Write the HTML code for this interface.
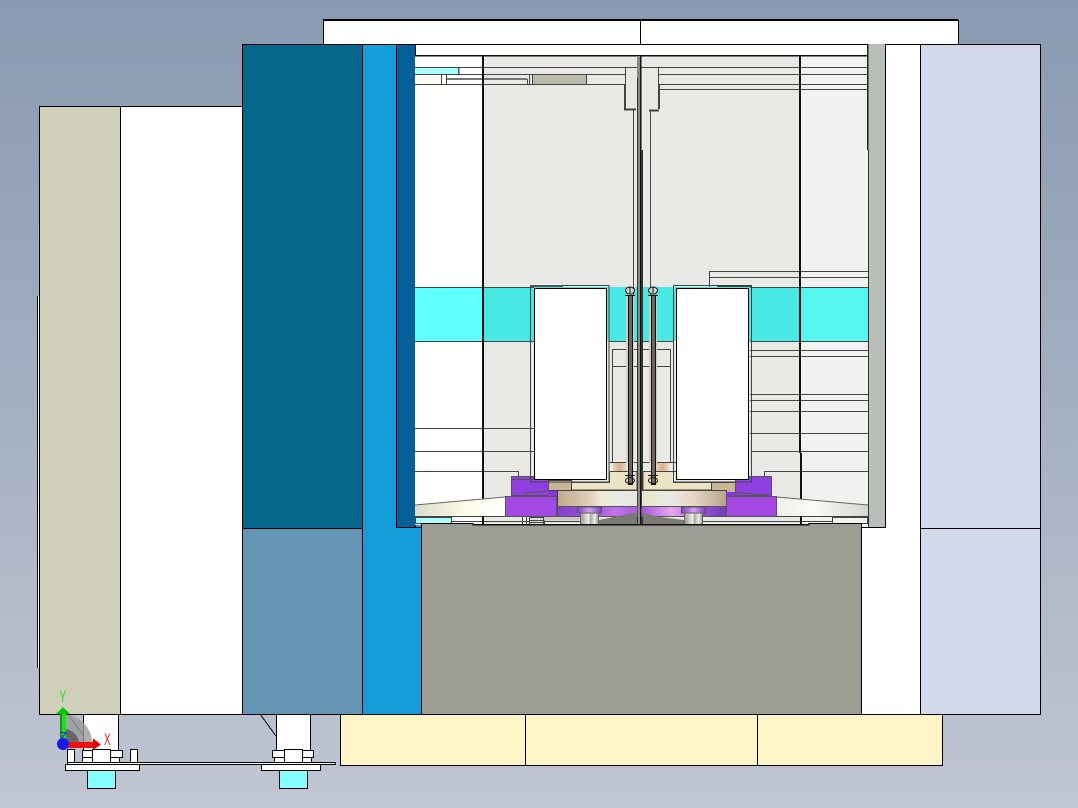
<!DOCTYPE html>
<html><head><meta charset="utf-8"><style>
html,body{margin:0;padding:0;width:1078px;height:808px;overflow:hidden}
svg{display:block}
text{font-family:"Liberation Sans",sans-serif}
</style></head><body>
<svg width="1078" height="808" viewBox="0 0 1078 808" xmlns="http://www.w3.org/2000/svg">
<defs>
<linearGradient id="bg" x1="0" y1="0" x2="0" y2="1"><stop offset="0" stop-color="#8899b1"/><stop offset="1" stop-color="#c0c6d2"/></linearGradient>
<linearGradient id="tanL" x1="0" y1="0" x2="1" y2="0"><stop offset="0" stop-color="#bfa98d"/><stop offset=".4" stop-color="#ded0b8"/><stop offset=".55" stop-color="#f0ebd8"/><stop offset=".8" stop-color="#e8e8e4"/><stop offset="1" stop-color="#e6e6e0"/></linearGradient>
<linearGradient id="tanR" x1="0" y1="0" x2="1" y2="0"><stop offset="0" stop-color="#e8e6c8"/><stop offset=".35" stop-color="#e9e9e4"/><stop offset=".6" stop-color="#e6d8c6"/><stop offset="1" stop-color="#b5a28c"/></linearGradient>
<linearGradient id="purL" x1="0" y1="0" x2="1" y2="0"><stop offset="0" stop-color="#7f41c8"/><stop offset=".4" stop-color="#a24fe0"/><stop offset=".7" stop-color="#c070e8"/><stop offset="1" stop-color="#b060e0"/></linearGradient>
<linearGradient id="purR" x1="0" y1="0" x2="1" y2="0"><stop offset="0" stop-color="#a850e0"/><stop offset=".35" stop-color="#e6a8ee"/><stop offset=".7" stop-color="#9a50dc"/><stop offset="1" stop-color="#6e3fb0"/></linearGradient>
<linearGradient id="wedgeL" x1="0" y1="0" x2="1" y2="0"><stop offset="0" stop-color="#dcdccc"/><stop offset=".55" stop-color="#fbfbe8"/><stop offset="1" stop-color="#ffffff"/></linearGradient>
<linearGradient id="wedgeR" x1="0" y1="0" x2="1" y2="0"><stop offset="0" stop-color="#eeeeea"/><stop offset=".4" stop-color="#fafaf6"/><stop offset="1" stop-color="#d4d6d0"/></linearGradient>
<linearGradient id="bolt" x1="0" y1="0" x2="1" y2="0"><stop offset="0" stop-color="#9a9a90"/><stop offset=".45" stop-color="#f0f0ea"/><stop offset=".55" stop-color="#a8a8a0"/><stop offset=".8" stop-color="#eeeeea"/><stop offset="1" stop-color="#8c8c84"/></linearGradient>
<linearGradient id="skin" x1="0" y1="0" x2="1" y2="0"><stop offset="0" stop-color="#e6d2b8"/><stop offset=".5" stop-color="#d9b28e"/><stop offset="1" stop-color="#e8dccb"/></linearGradient>
<linearGradient id="collar" x1="0" y1="0" x2="1" y2="0"><stop offset="0" stop-color="#7a3fc8"/><stop offset=".5" stop-color="#d6a0ee"/><stop offset="1" stop-color="#7a3fc8"/></linearGradient>
</defs>
<rect width="1078" height="808" fill="url(#bg)"/>

<g shape-rendering="crispEdges" stroke="#000" stroke-width="1">
<rect x="83.500" y="714.500" width="35" height="36" fill="#fff"/>
<rect x="276.500" y="714.500" width="34" height="36" fill="#fff"/>
<rect x="39.500" y="106.500" width="81" height="608" fill="#d0cfb9"/>
<rect x="120.500" y="106.500" width="122" height="608" fill="#fff"/>
<rect x="242.500" y="44.500" width="120" height="484" fill="#05678b"/>
<rect x="242.500" y="528.500" width="120" height="186" fill="#6595b5"/>
<rect x="362.500" y="44.500" width="59" height="670" fill="#149dd8"/>
<rect x="860.500" y="44.500" width="60" height="670" fill="#fff"/>
<rect x="920.500" y="44.500" width="120" height="484" fill="#d2d8e9"/>
<rect x="920.500" y="528.500" width="120" height="186" fill="#d2d8e9"/>
<rect x="323.500" y="20.500" width="635" height="24" fill="#fff"/>
<rect x="323" y="19" width="635" height="2" fill="#000" stroke="none"/>
<line x1="640.500" y1="20" x2="640.500" y2="44"/>
<rect x="340.500" y="714.500" width="602" height="51" fill="#fff3c8"/>
<line x1="525.500" y1="714" x2="525.500" y2="766"/>
<line x1="757.500" y1="714" x2="757.500" y2="766"/>
<rect x="396.500" y="44.500" width="19" height="483" fill="#05609a"/>
</g>

<g shape-rendering="crispEdges">
<rect x="416" y="45" width="452" height="11" fill="#fff"/>
<rect x="415" y="55" width="68" height="470" fill="#fff"/>
<rect x="483" y="56" width="317" height="469" fill="#e8e9e4"/>
<rect x="800" y="56" width="68" height="469" fill="#f1f1ef"/>
<rect x="868" y="44" width="17" height="483" fill="#b8bfb8"/>
<rect x="885" y="44" width="1" height="483" fill="#000"/>
<rect x="867" y="44" width="1.500" height="106" fill="#222"/>
<rect x="868" y="150" width="1" height="377" fill="#333"/>
<rect x="396" y="527" width="490" height="1" fill="#000"/>
<rect x="415" y="55" width="453" height="1.500" fill="#111"/>
<rect x="415" y="44" width="1" height="12" fill="#000"/>
<rect x="415" y="287" width="68" height="54" fill="#5fffff"/>
<rect x="483" y="287" width="317" height="54" fill="#48e8e4"/>
<rect x="800" y="287" width="68" height="54" fill="#55f5f0"/>
<rect x="415" y="68" width="43" height="6" fill="#a8ffff"/>
<rect x="415" y="75" width="26" height="9" fill="#fbfdf5"/>
<rect x="442" y="75" width="41" height="9" fill="#fff"/>
<rect x="533" y="75" width="53" height="9" fill="#b9b9ac"/>
<rect x="447" y="78" width="80" height="2" fill="#777"/>
<rect x="458" y="68" width="1.500" height="6" fill="#555"/>
</g>

<g shape-rendering="crispEdges" stroke="#444" stroke-width="1" fill="none">
<path d="M415 67.500H868M415 74.500H868M415 84.500H625M658 84.500H868M659 89.500H868"/>
<path d="M441.500 75V84M446.500 75V84M527.500 79V84M529.500 75V84M532.500 75V84M586.500 75V84"/>
<path d="M415 287.500H534M750 287.500H868M415 341.500H534M609 341.500H673M750 341.500H868"/>
<path d="M709.500 271V287M709 271.500H868M709 277.500H868"/>
<path d="M750 350.500H868M750 356.500H868M750 394.500H868M750 400.500H868M750 411.500H868M750 433.500H868M752 451.500H868M764 471.500H868M764.500 471V476"/>
<path d="M415 428.500H534M415 451.500H534M415 471.500H518M518.500 471V476"/>
<path d="M612.500 349V462M670.500 349V462M612 349.500H671M612 366.500H671M609 462.500H676M609 471.500H676"/>
<path d="M415 516.500H868M415 521.500H868"/>
<path d="M633.500 110V341M650.500 110V341"/>
<path d="M522.500 516V524M526.500 516V524M544.500 516V524"/>
</g>

<g shape-rendering="crispEdges">
<rect x="625" y="68" width="33" height="42" fill="#e8e9e4"/>
<path d="M625.500 67V84" stroke="#444" fill="none"/>
<path d="M658.500 67V84" stroke="#444" fill="none"/>
<path d="M625 84V109M659 84V109" stroke="#444" stroke-width="2" fill="none"/>
<path d="M624 109.500H636M649 110.500H659" stroke="#444" stroke-width="2" fill="none"/>
<path d="M633.500 110V115M650.500 110V115" stroke="#444" fill="none"/>
<rect x="637" y="56" width="3" height="469" fill="#8a8a84"/>
</g>

<g shape-rendering="crispEdges">
<rect x="482" y="56" width="2" height="469" fill="#111"/>
<rect x="799" y="56" width="2" height="397" fill="#111"/>
<rect x="800" y="453" width="2" height="72" fill="#111"/>
<rect x="640" y="56" width="1.500" height="469" fill="#111"/>
<rect x="637" y="78" width="1" height="447" fill="#333"/>
<rect x="641" y="150" width="2" height="375" fill="#333"/>
<rect x="37" y="296" width="1" height="372" fill="#111"/>
<rect x="38" y="296" width="1" height="372" fill="#fff"/>
</g>

<polygon points="415,505 505,497 505,516 415,516" fill="url(#wedgeL)"/>
<polygon points="777,497 868,505 868,516 777,516" fill="url(#wedgeR)"/>
<path d="M415 505L505 497M777 497L868 505" stroke="#666" stroke-width="1" fill="none"/>

<g shape-rendering="crispEdges" stroke="#444" stroke-width="1">
<rect x="415.500" y="517.500" width="36" height="6" fill="#a8ffff"/>
<rect x="832.500" y="517.500" width="35" height="6" fill="#f1f1ef"/>
<rect x="543" y="517" width="37" height="3.500" fill="#c8c8c0" stroke="none"/>
<rect x="529.500" y="517.500" width="14" height="7" fill="#ddd"/>
<path d="M529 520.500H543M529 522.500H543" fill="none"/>
<path d="M571.500 490V482.500H609.500V471.500H637V490Z" fill="#ebe3c2"/>
<path d="M711.500 490V482.500H673.500V471.500H643V490Z" fill="#ebe3c2"/>
<rect x="548.500" y="480.500" width="23" height="10" fill="#c8b594"/>
<rect x="711.500" y="482.500" width="24" height="10" fill="#c8b594"/>
<rect x="557.500" y="490.500" width="80" height="16" fill="url(#tanL)"/>
<rect x="641.500" y="490.500" width="85" height="16" fill="url(#tanR)"/>
<rect x="557.500" y="506.500" width="80" height="10" fill="url(#purL)" stroke="#555"/>
<rect x="641.500" y="506.500" width="85" height="10" fill="url(#purR)" stroke="#555"/>
<rect x="613" y="463" width="14" height="8" fill="url(#skin)" stroke="none"/>
<rect x="656" y="463" width="13" height="8" fill="url(#skin)" stroke="none"/>
<rect x="511.500" y="476.500" width="37" height="19" fill="#8f3fe0" stroke="#555"/>
<rect x="735.500" y="476.500" width="36" height="19" fill="#8f3fe0" stroke="#555"/>
<path d="M511 479.500H548" stroke="#555" fill="none"/>
<path d="M524 493.500L548 490.500M735 492.500L771 495.500" stroke="#555" fill="none"/>
<rect x="505.500" y="496.500" width="51" height="20" fill="#a448e4" stroke="#555"/>
<rect x="726.500" y="496.500" width="50" height="20" fill="#a448e4" stroke="#555"/>
<rect x="548" y="491" width="9" height="5" fill="#8436d8" stroke="none"/>
<rect x="726" y="492" width="9" height="4" fill="#8436d8" stroke="none"/>
<rect x="577.500" y="507" width="24" height="6" fill="url(#collar)" stroke="#555"/>
<rect x="681.500" y="507" width="24" height="6" fill="url(#collar)" stroke="#555"/>
<rect x="580.500" y="513" width="18" height="12" fill="url(#bolt)" stroke="#666"/>
<rect x="684.500" y="513" width="18" height="12" fill="url(#bolt)" stroke="#666"/>
</g>
<polygon points="599,520 633,513 637,513 637,525 599,525" fill="#7a7a72"/>
<polygon points="643,513 660,517 684,520 684,525 643,525" fill="#7a7a72"/>

<g shape-rendering="crispEdges">
<rect x="530.500" y="285.500" width="78.500" height="196.500" fill="none" stroke="#444" stroke-width="1"/>
<rect x="673.500" y="285.500" width="78" height="196.500" fill="none" stroke="#444" stroke-width="1"/>
<rect x="530" y="285" width="33" height="2" fill="#555"/>
<rect x="717" y="285" width="35" height="2" fill="#3f3f3a"/>
<rect x="534.500" y="288.500" width="72" height="191" fill="#fff" stroke="#000" stroke-width="1"/>
<rect x="676.500" y="288.500" width="72" height="191" fill="#fff" stroke="#000" stroke-width="1"/>
</g>

<g shape-rendering="crispEdges">
<rect x="626" y="295" width="8" height="168" fill="#cfcec8"/>
<rect x="649" y="295" width="8" height="168" fill="#cfcec8"/>
<rect x="628.500" y="295.500" width="4" height="189" fill="#6e665f" stroke="#111" stroke-width="1"/>
<rect x="651.500" y="295.500" width="4" height="189" fill="#6e665f" stroke="#111" stroke-width="1"/>
</g>
<g fill="#d4d4cc" stroke="#111" stroke-width="1">
<ellipse cx="630" cy="290.500" rx="4.500" ry="3.500"/><line x1="625" y1="295.500" x2="635" y2="295.500"/>
<ellipse cx="653" cy="290.500" rx="4.500" ry="3.500"/><line x1="648" y1="295.500" x2="658" y2="295.500"/>
<ellipse cx="630" cy="480.500" rx="4.500" ry="3" fill="none"/><line x1="625" y1="475.500" x2="635" y2="475.500"/>
<ellipse cx="653" cy="480.500" rx="4.500" ry="3" fill="none"/><line x1="648" y1="475.500" x2="658" y2="475.500"/>
<path d="M630 287v6M653 287v6" fill="none"/>
</g>

<g shape-rendering="crispEdges">
<polygon points="421.500,523.500 473,523.500 473,525 809,525 809,523.500 861.500,523.500 861.500,714.500 421.500,714.500" fill="#9d9c92" stroke="#000" stroke-width="1"/>
<rect x="473" y="524" width="336" height="1.500" fill="#111"/>
</g>

<g shape-rendering="crispEdges" stroke="#000" stroke-width="1" fill="#fff">
<rect x="67.500" y="762.500" width="268" height="2"/>
<rect x="87.500" y="770.500" width="28" height="18" fill="#86ffff"/>
<rect x="279.500" y="770.500" width="28" height="18" fill="#86ffff"/>
<rect x="65.500" y="764.500" width="74" height="6"/>
<rect x="261.500" y="764.500" width="59" height="6"/>
<rect x="67.500" y="749.500" width="7" height="13"/>
<rect x="130.500" y="749.500" width="7" height="13"/>
<rect x="82.500" y="750.500" width="40" height="7"/>
<rect x="82.500" y="757.500" width="37" height="5"/>
<rect x="92.500" y="749.500" width="18" height="13"/>
<rect x="272.500" y="750.500" width="41" height="7"/>
<rect x="274.500" y="757.500" width="37" height="5"/>
<rect x="284.500" y="749.500" width="18" height="13"/>
<path d="M68 714L83 735M260 714L276 736" fill="none"/>
</g>

<path d="M66 714.500A29 29 0 0 1 92 742H66Z" fill="#9a9a9a" opacity=".8"/>
<path d="M66 729A16 16 0 0 1 79 742H66Z" fill="#666"/>
<rect x="60" y="713" width="6" height="30" fill="#22dd22"/>
<rect x="60" y="713" width="2" height="30" fill="#119911"/>
<polygon points="63,707 70,714 56,714" fill="#00c800"/>
<rect x="63" y="742" width="31" height="6" fill="#ee1111"/>
<polygon points="101,744.500 93,738.500 93,750" fill="#dd0000"/>
<circle cx="63" cy="744" r="6" fill="#1818ee"/>
<path d="M60.500 732.500H66L62 738" stroke="#1818ee" stroke-width="1" fill="none"/>
<text transform="translate(59.500 702) scale(.6 1)" font-size="16.700" fill="#22dd22">Y</text>
<text transform="translate(104 745) scale(.6 1)" font-size="16.700" fill="#ee2222">X</text>
</svg>
</body></html>
